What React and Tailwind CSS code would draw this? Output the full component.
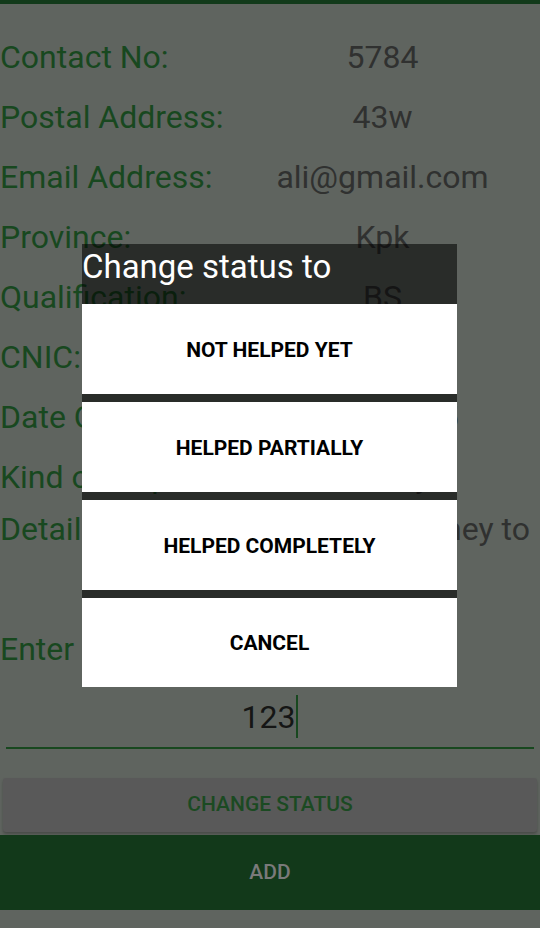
import React from "react";

const rows = [
  ["Contact No:", "5784"],
  ["Postal Address:", "43w"],
  ["Email Address:", "ali@gmail.com"],
  ["Province:", "Kpk"],
  ["Qualification:", "BS"],
  ["CNIC:", "12345"],
  ["Date Of Birth:", "12/3/1995"],
  ["Kind of help:", "Money"],
];

export default function App() {
  return (
    <div className="relative w-[540px] h-[928px] overflow-hidden bg-[#5f645f] font-['Roboto',sans-serif]">
      <div className="h-[4px] bg-[#123a1a]" />
      <div className="pt-[23px] flex flex-col">
        {rows.map(([l, v]) => (
          <div key={l} className="h-[60px] flex items-center text-[32px] leading-none">
            <div className="w-[225px] text-[#18481f] whitespace-nowrap">{l}</div>
            <div className="flex-1 text-center text-[#303130] whitespace-nowrap">{v}</div>
          </div>
        ))}
        <div className="mt-[3px] h-[76px] flex text-[32px] leading-[38px]">
          <div className="w-[150px] text-[#18481f] whitespace-nowrap">Detail:</div>
          <div className="flex-1 text-[#303130] flex flex-col items-end pr-[10px] whitespace-nowrap">
            <span>I need money to</span>
            <span className="self-center pl-[90px]">pay fee</span>
          </div>
        </div>
        <div className="mt-[33px] h-[60px] flex items-center text-[32px] leading-none text-[#18481f] whitespace-nowrap">
          Enter Amount:
        </div>
        <div className="mt-[12px] mx-[6px] h-[58px] pb-[5px] flex items-center justify-center border-b-2 border-[#18481f]">
          <span className="text-[32px] leading-none text-[#151615]">123</span>
          <span className="w-[2px] h-[43px] bg-[#18481f] ml-[1px]" />
        </div>
        <div className="mt-[29px] mx-[3px] h-[54px] rounded-[3px] bg-[#595959] shadow-[0_2px_3px_rgba(0,0,0,0.25)] flex items-center justify-center text-[21px] font-medium text-[#1b4a22]">
          CHANGE STATUS
        </div>
        <div className="mt-[3px] h-[75px] bg-[#12391a] flex items-center justify-center text-[21px] font-medium text-[#7a7a7a]">
          ADD
        </div>
      </div>

      <div className="absolute left-[82px] top-[244px] w-[375px] bg-[rgba(0,0,0,0.56)] flex flex-col">
        <div className="h-[60px] text-[33px] leading-[46px] text-white whitespace-nowrap">Change status to</div>
        <div className="flex flex-col gap-[8px]">
          {["NOT HELPED YET", "HELPED PARTIALLY", "HELPED COMPLETELY", "CANCEL"].map((t, i) => (
            <div
              key={t}
              className={`${i === 3 ? "h-[89px]" : "h-[90px]"} pt-[3px] bg-white flex items-center justify-center text-[21px] font-bold text-black whitespace-nowrap`}
            >
              {t}
            </div>
          ))}
        </div>
      </div>
    </div>
  );
}
